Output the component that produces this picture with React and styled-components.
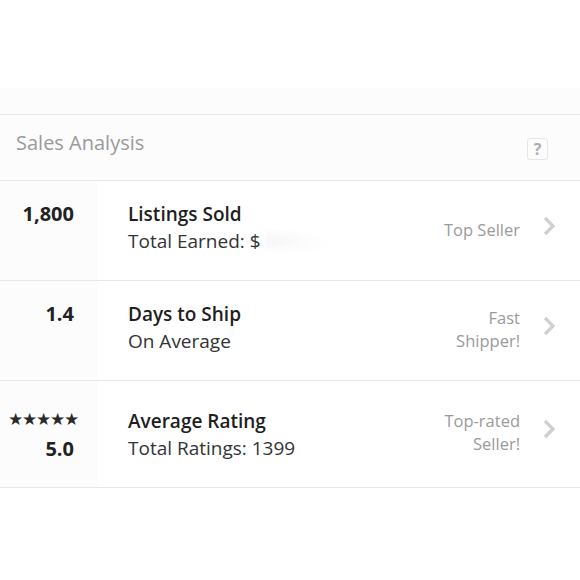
import styled, { createGlobalStyle } from "styled-components"

const Global = createGlobalStyle`
  *, *::before, *::after { box-sizing: border-box; }
  body {
    margin: 0;
    background: #fff;
    font-family: "Open Sans", "Liberation Sans", sans-serif;
  }
`

const Page = styled.div`
  width: 580px;
  height: 580px;
  display: flex;
  flex-direction: column;
  background: #fff;
`

const TopSpace = styled.div`
  height: 88px;
  background: #fff;
`

const Band = styled.div`
  height: 27px;
  background: #fcfcfc;
  border-bottom: 1px solid #e8e8e8;
`

const Header = styled.div`
  height: 66px;
  display: flex;
  align-items: center;
  justify-content: space-between;
  padding: 0 32px 0 16px;
  background: #fcfcfc;
  border-bottom: 1px solid #e8e8e8;
`

const HeaderTitle = styled.div`
  font-size: 20px;
  color: #9a9a9a;
  margin-top: -10px;
`

const Help = styled.div`
  width: 21px;
  height: 22px;
  border: 1px solid #e6e6e6;
  border-radius: 3px;
  display: flex;
  align-items: center;
  justify-content: center;
  font-size: 16px;
  font-weight: 700;
  color: #adadad;
  margin-top: 2px;
`

const Row = styled.div`
  height: ${p => p.$h}px;
  display: grid;
  grid-template-columns: 97px 1fr auto 60px;
  border-bottom: 1px solid #e8e8e8;
  background: #fff;
`

const Left = styled.div`
  background: #fcfcfc;
  display: flex;
  flex-direction: column;
  align-items: flex-end;
  padding: ${p => p.$pt}px 23px 0 0;
`

const Number = styled.div`
  font-size: 20px;
  font-weight: 700;
  color: #222;
  line-height: 24px;
`

const Stars = styled.div`
  font-size: 17px;
  color: #2a2a2a;
  letter-spacing: -1px;
  line-height: 16px;
  margin: 0 -4px 10px 0;
`

const Main = styled.div`
  padding: ${p => p.$pt}px 0 0 31px;
  display: flex;
  flex-direction: column;
  gap: 3px;
`

const Title = styled.div`
  font-size: 19px;
  font-weight: 600;
  color: #1e1e1e;
  line-height: 24px;
`

const Sub = styled.div`
  font-size: 19px;
  color: #333;
  line-height: 24px;
  display: flex;
  align-items: center;
`

const Redacted = styled.span`
  display: inline-block;
  width: 130px;
  height: 16px;
  margin-left: 4px;
  background: linear-gradient(90deg, #f7f7f7, #fff 50%);
  filter: blur(3px);
`

const Badge = styled.div`
  padding-top: ${p => p.$pt}px;
  text-align: right;
  font-size: 16.5px;
  color: #9a9a9a;
  line-height: 23px;
`

const Chevron = styled.div`
  padding: ${p => p.$pt}px 0 0 21px;
`

const ChevronIcon = () => (
  <svg width="16" height="22" viewBox="0 0 16 22">
    <path d="M4 3 L12 11 L4 19" fill="none" stroke="#cfcfcf" strokeWidth="3.2" />
  </svg>
)

const rows = [
  { h: 100, left: <Number>1,800</Number>, lp: 21, title: "Listings Sold", sub: <>Total Earned: $<Redacted /></>, mp: 21, badge: ["Top Seller"], bp: 37, cp: 34 },
  { h: 100, left: <Number>1.4</Number>, lp: 21, title: "Days to Ship", sub: "On Average", mp: 21, badge: ["Fast", "Shipper!"], bp: 25, cp: 34 },
  { h: 107, left: <><Stars>★★★★★</Stars><Number>5.0</Number></>, lp: 30, title: "Average Rating", sub: "Total Ratings: 1399", mp: 28, badge: ["Top-rated", "Seller!"], bp: 28, cp: 37 },
]

export default function App() {
  return (
    <Page>
      <Global />
      <TopSpace />
      <Band />
      <Header>
        <HeaderTitle>Sales Analysis</HeaderTitle>
        <Help>?</Help>
      </Header>
      {rows.map((r, i) => (
        <Row key={i} $h={r.h}>
          <Left $pt={r.lp}>{r.left}</Left>
          <Main $pt={r.mp}>
            <Title>{r.title}</Title>
            <Sub>{r.sub}</Sub>
          </Main>
          <Badge $pt={r.bp}>
            {r.badge.map(b => <div key={b}>{b}</div>)}
          </Badge>
          <Chevron $pt={r.cp}><ChevronIcon /></Chevron>
        </Row>
      ))}
    </Page>
  )
}
